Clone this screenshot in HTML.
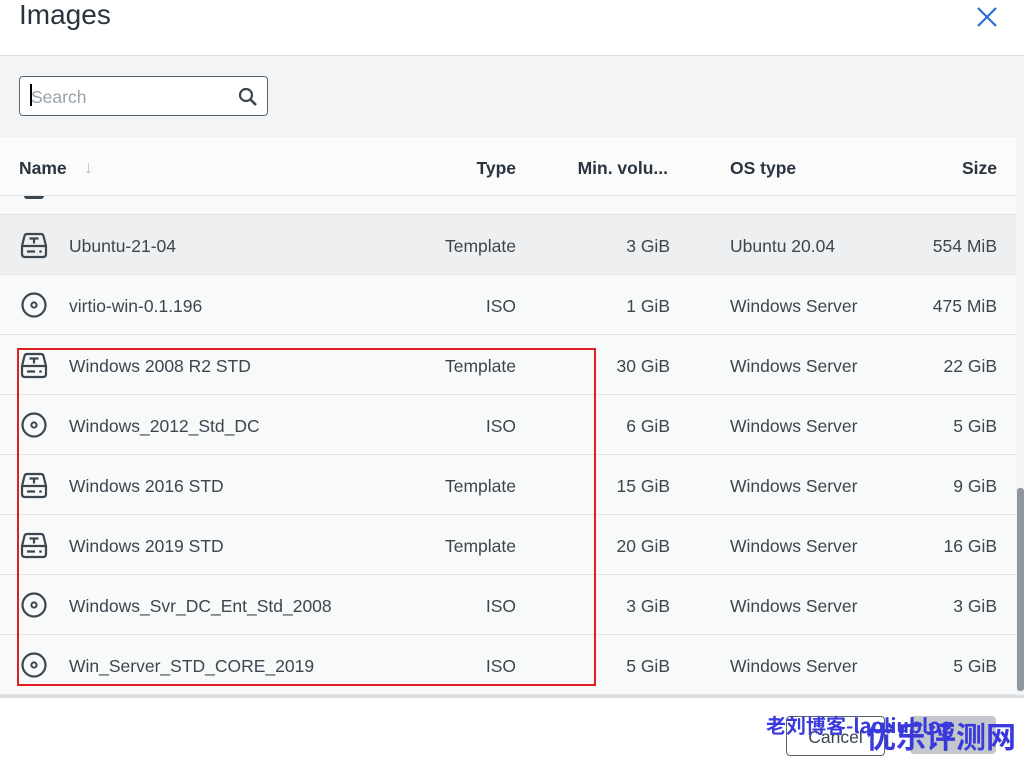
<!DOCTYPE html><html><head><style>
body{margin:0;width:1024px;height:761px;overflow:hidden;font-family:"Liberation Sans",sans-serif;background:#fff;position:relative;color:#3c4650}
.a{position:absolute}
.row{position:absolute;left:0;width:1016px;height:59px;border-bottom:1px solid #e1e3e5;background:#f8f9f9;font-size:17.5px;color:#3c4650}
.row span{position:absolute;top:21px;white-space:nowrap}
.n{left:69px}.t{right:500px}.v{right:346px}.o{left:730px;width:128px;overflow:hidden}.s{right:19px}
.ic{position:absolute;left:21px;top:17px}
</style></head><body>
<div class="a" style="left:19px;top:-1px;font-size:28px;color:#2a3440">Images</div>
<svg class="a" style="left:976px;top:6px" width="22" height="22"><path d="M2 2L20 20M20 2L2 20" stroke="#2a6fd6" stroke-width="2.2"/></svg>
<div class="a" style="top:55px;left:0;width:1024px;height:81px;background:#f3f4f5;border-top:1px solid #dcdfe2;border-bottom:1px solid #dcdfe2"></div>
<div class="a" style="left:19px;top:76px;width:247px;height:38px;border:1px solid #5a6470;border-radius:4px;background:#fff"></div>
<div class="a" style="left:30px;top:84px;width:2px;height:22px;background:#000"></div>
<div class="a" style="left:31px;top:87px;font-size:17.5px;color:#9aa2aa">Search</div>
<svg class="a" style="left:238px;top:87px" width="20" height="20"><circle cx="8" cy="8" r="6" fill="none" stroke="#3c4650" stroke-width="2.2"/><path d="M12.5 12.5L18 18" stroke="#3c4650" stroke-width="2.6"/></svg>
<div class="a" style="top:137px;left:0;width:1016px;height:58px;background:#fbfbfc;border-bottom:1px solid #e1e3e5;font-size:17.5px;font-weight:bold;color:#2a3440">
<span class="a" style="left:19px;top:21px">Name</span><span class="a" style="left:84px;top:20px;color:#b8bec4;font-weight:normal">↓</span>
<span class="a" style="right:500px;top:21px">Type</span><span class="a" style="right:348px;top:21px">Min. volu...</span>
<span class="a" style="left:730px;top:21px">OS type</span><span class="a" style="right:19px;top:21px">Size</span></div>
<div class="row" style="top:196px;height:18px"><div class="a" style="left:24px;top:0;width:20px;height:3px;background:#3c4650;border-radius:0 0 3px 3px"></div></div>
<div id="rows"></div>
<div class="a" style="left:1016px;top:136px;width:8px;height:560px;background:#f3f4f5"></div>
<div class="a" style="left:1017px;top:488px;width:7px;height:203px;background:#8f969d;border-radius:3px"></div>
<div class="a" style="left:0;top:695px;width:1024px;height:3px;background:#dcdfe2"></div>
<div class="a" style="left:17px;top:348px;width:575px;height:334px;border:2px solid #e02020"></div>
<div class="a" style="left:786px;top:716px;width:97px;height:38px;border:1px solid #5a6470;border-radius:4px;font-size:17.5px;text-align:center;line-height:40px">Cancel</div>
<div class="a" style="left:910px;top:716px;width:86px;height:38px;background:#c4c7cb;border-radius:4px"></div>
<div class="a" style="left:766px;top:710px;font-size:20px;font-weight:bold;color:#3a3adc;font-family:'Noto Sans CJK SC',sans-serif">老刘博客-laoliublog</div>
<div class="a" style="left:866px;top:713px;font-size:30px;font-weight:bold;color:#3a3adc;font-family:'Noto Sans CJK SC',sans-serif;line-height:44px">优乐评测网</div>
<script>
var d=[["Ubuntu-21-04","Template","3 GiB","Ubuntu 20.04","554 MiB"],["virtio-win-0.1.196","ISO","1 GiB","Windows Server","475 MiB"],["Windows 2008 R2 STD","Template","30 GiB","Windows Server","22 GiB"],["Windows_2012_Std_DC","ISO","6 GiB","Windows Server","5 GiB"],["Windows 2016 STD","Template","15 GiB","Windows Server","9 GiB"],["Windows 2019 STD","Template","20 GiB","Windows Server","16 GiB"],["Windows_Svr_DC_Ent_Std_2008","ISO","3 GiB","Windows Server","3 GiB"],["Win_Server_STD_CORE_2019","ISO","5 GiB","Windows Server","5 GiB"]];
var tpl='<svg class="ic" width="28" height="28" style="left:20px;top:16px"><path d="M7 3H21Q23 3 23.5 5L26 15V23Q26 26 23 26H5Q2 26 2 23V15L4.5 5Q5 3 7 3Z" fill="none" stroke="#3c4650" stroke-width="2.2" stroke-linejoin="round"/><path d="M2.5 15H25.5" stroke="#3c4650" stroke-width="2.2"/><path d="M9.5 7.5h9M14 7.5v5M7 20.5h8" stroke="#3c4650" stroke-width="2.2"/><circle cx="20.5" cy="20.5" r="1.3" fill="#3c4650"/></svg>';
var iso='<svg class="ic" width="28" height="28"><circle cx="13" cy="13" r="11.5" fill="none" stroke="#3c4650" stroke-width="2.2"/><circle cx="13" cy="13" r="2.6" fill="none" stroke="#3c4650" stroke-width="2"/></svg>';
var h='';d.forEach(function(r,i){h+='<div class="row" style="top:'+(215+i*60)+'px;'+(i==0?'background:#eeeff0':'')+'">'+(r[1]=='ISO'?iso:tpl)+'<span class="n">'+r[0]+'</span><span class="t">'+r[1]+'</span><span class="v">'+r[2]+'</span><span class="o">'+r[3]+'</span><span class="s">'+r[4]+'</span></div>'});
document.getElementById('rows').innerHTML=h;
</script></body></html>
